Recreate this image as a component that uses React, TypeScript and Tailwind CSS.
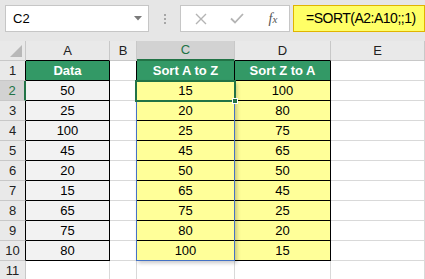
import React from 'react';

const COLS = ['A', 'B', 'C', 'D', 'E'];

const colA = ['50', '25', '100', '45', '20', '15', '65', '75', '80'];
const colC = ['15', '20', '25', '45', '50', '65', '75', '80', '100'];
const colD = ['100', '80', '75', '65', '50', '45', '25', '20', '15'];

const font = { fontFamily: '"Liberation Sans", Arial, sans-serif' };

function cellClass(row: number, col: number): string {
  const base = 'flex h-[20px] items-center justify-center text-[13px] text-black';
  const inTable = row >= 1 && row <= 10;
  if (inTable && row === 1 && (col === 0 || col === 2 || col === 3)) {
    return `${base} border-r border-b border-black bg-[#339966] font-bold text-white`;
  }
  if (inTable && col === 0) {
    return `${base} border-r border-b border-black bg-[#f2f2f2]`;
  }
  if (inTable && (col === 2 || col === 3)) {
    return `${base} border-r border-b border-black bg-[#ffff99]`;
  }
  if (inTable && col === 1) {
    return `${base} border-r border-b border-r-black border-b-[#d9d9d9] bg-white`;
  }
  return `${base} border-r border-b border-[#d9d9d9] bg-white`;
}

function cellText(row: number, col: number): string {
  if (row === 1) return ['Data', '', 'Sort A to Z', 'Sort Z to A', ''][col];
  if (row >= 2 && row <= 10) {
    if (col === 0) return colA[row - 2];
    if (col === 2) return colC[row - 2];
    if (col === 3) return colD[row - 2];
  }
  return '';
}

function FormulaBar() {
  return (
    <div className="flex h-[41px] items-start gap-0 bg-[#e6e6e6] pt-[5px] pl-[5px]">
      {/* Name box */}
      <div className="flex h-[27px] w-[144px] items-center justify-between border border-[#c6c6c6] bg-white pl-[7px] pr-[6px]">
        <span className="text-[13px] text-black">C2</span>
        <svg width="8" height="5" viewBox="0 0 8 5">
          <path d="M0 0 L8 0 L4 4.5 Z" fill="#7a7a7a" />
        </svg>
      </div>
      {/* Dots */}
      <div className="flex h-[27px] w-[31px] flex-col items-center justify-center gap-[2px]">
        <span className="h-[2px] w-[2px] bg-[#a6a6a6]" />
        <span className="h-[2px] w-[2px] bg-[#a6a6a6]" />
        <span className="h-[2px] w-[2px] bg-[#a6a6a6]" />
      </div>
      {/* Cancel / enter / fx */}
      <div className="flex h-[27px] w-[110px] items-center border border-[#c6c6c6] bg-white">
        <div className="flex w-[36px] justify-center pl-[4px]">
          <svg width="12" height="12" viewBox="0 0 12 12">
            <path d="M1 1 L11 11 M11 1 L1 11" stroke="#b4b4b4" strokeWidth="1.4" />
          </svg>
        </div>
        <div className="flex w-[36px] justify-center pl-[4px]">
          <svg width="14" height="11" viewBox="0 0 14 11">
            <path d="M1 5.5 L5 9.5 L13 1" stroke="#b4b4b4" strokeWidth="1.8" fill="none" />
          </svg>
        </div>
        <div className="flex w-[36px] justify-center pl-[4px]">
          <span
            className="text-[14px] italic text-[#555555]"
            style={{ fontFamily: '"Liberation Serif", "Times New Roman", serif' }}
          >
            f<span className="text-[11px]">x</span>
          </span>
        </div>
      </div>
      {/* Formula */}
      <div className="ml-[3px] flex h-[27px] flex-1 items-center border border-[#e0b400] bg-[#ffff66] pl-[12px]">
        <span className="text-[14px] tracking-[-0.5px] text-black">=SORT(A2:A10;;1)</span>
      </div>
    </div>
  );
}

export default function App() {
  const rows = Array.from({ length: 11 }, (_, i) => i + 1);

  return (
    <div className="h-[279px] w-[425px] overflow-hidden bg-white" style={font}>
      <FormulaBar />

      <div className="relative">
        <div className="grid grid-cols-[26px_84px_27px_98px_96px_1fr]">
          {/* Header row */}
          <div className="relative h-[20px] border-r border-b border-[#c8c8c8] bg-[#e9e9e9]">
            <svg className="absolute right-[3px] bottom-[3px]" width="12" height="12" viewBox="0 0 12 12">
              <path d="M12 0 L12 12 L0 12 Z" fill="#b8b8b8" />
            </svg>
          </div>
          {COLS.map((c, i) => (
            <div
              key={c}
              className={
                i === 2
                  ? 'flex h-[20px] items-center justify-center border-r border-b-2 border-r-[#c8c8c8] border-b-[#217346] bg-[#d2d2d2] text-[13px] text-[#217346]'
                  : i === 0 || i === 3
                    ? 'flex h-[20px] items-center justify-center border-r border-b border-r-[#c8c8c8] border-b-black bg-[#e9e9e9] text-[13px] text-[#222]'
                    : 'flex h-[20px] items-center justify-center border-r border-b border-[#c8c8c8] bg-[#e9e9e9] text-[13px] text-[#222]'
              }
            >
              {c}
            </div>
          ))}

          {rows.map((r) => (
            <React.Fragment key={r}>
              <div
                className={
                  r === 2
                    ? 'flex h-[20px] items-center justify-center border-r-2 border-b border-r-[#217346] border-b-[#c8c8c8] bg-[#d2d2d2] text-[13px] text-[#217346]'
                    : r <= 10
                      ? 'flex h-[20px] items-center justify-center border-r border-b border-r-black border-b-[#c8c8c8] bg-[#e9e9e9] text-[13px] text-[#222]'
                      : 'flex h-[20px] items-center justify-center border-r border-b border-[#c8c8c8] bg-[#e9e9e9] text-[13px] text-[#222]'
                }
              >
                {r}
              </div>
              {COLS.map((_, ci) => (
                <div key={ci} className={cellClass(r, ci)}>
                  {cellText(r, ci)}
                </div>
              ))}
            </React.Fragment>
          ))}
        </div>

        {/* Spill range border */}
        <div className="pointer-events-none absolute top-[40px] left-[136px] h-[180px] w-[99px] border border-[#4472c4] shadow-[2px_2px_4px_rgba(0,0,0,0.22)]" />
        {/* Active cell */}
        <div className="pointer-events-none absolute top-[39px] left-[135px] h-[22px] w-[101px] border-2 border-[#217346]" />
        {/* Fill handle */}
        <div className="pointer-events-none absolute top-[57px] left-[232px] h-[6px] w-[6px] border border-white bg-[#217346]" />
      </div>
    </div>
  );
}
